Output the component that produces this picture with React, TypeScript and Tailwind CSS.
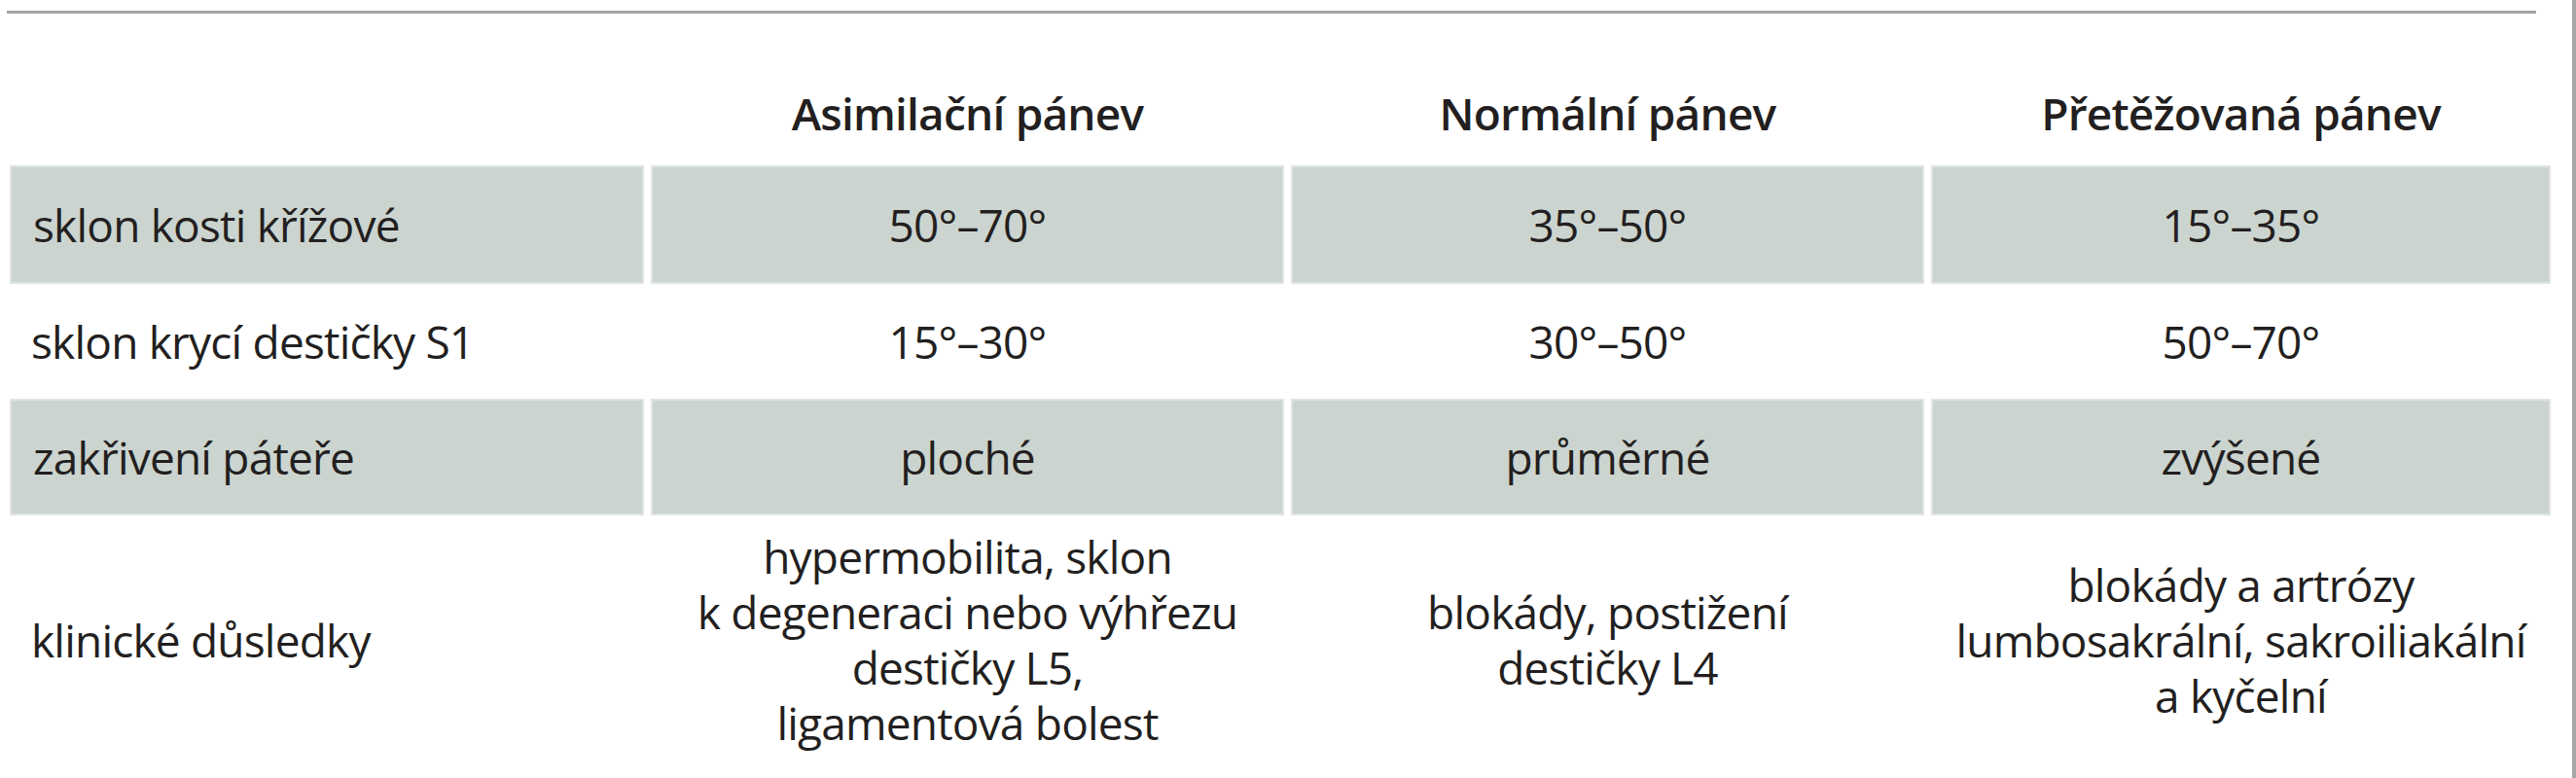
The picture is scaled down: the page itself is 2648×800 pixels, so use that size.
import React from "react";

type Row = { label: string; cells: React.ReactNode[]; shaded: boolean; h: string };

const rows: Row[] = [
  { label: "sklon kosti křížové", cells: ["50°–70°", "35°–50°", "15°–35°"], shaded: true, h: "h-[122px]" },
  { label: "sklon krycí destičky S1", cells: ["15°–30°", "30°–50°", "50°–70°"], shaded: false, h: "h-[118px]" },
  { label: "zakřivení páteře", cells: ["ploché", "průměrné", "zvýšené"], shaded: true, h: "h-[120px]" },
  {
    label: "klinické důsledky",
    cells: [
      <>
        hypermobilita, sklon
        <br />k degeneraci nebo výhřezu
        <br />destičky L5,
        <br />ligamentová bolest
      </>,
      <>
        blokády, postižení
        <br />destičky L4
      </>,
      <>
        blokády a artrózy
        <br />
        lumbosakrální, sakroiliakální
        <br />a kyčelní
      </>,
    ],
    shaded: false,
    h: "h-[256px]",
  },
];

const headers = ["Asimilační pánev", "Normální pánev", "Přetěžovaná pánev"];

export default function App() {
  return (
    <div className="w-[2648px] h-[800px] overflow-hidden bg-white border-r-[4px] border-[#a6a6a6] font-['Open_Sans',sans-serif] text-[46px] tracking-[-0.8px] leading-[57px] text-[#231f20]">
      <div className="mt-[11px] ml-[7px] w-[2600px] h-[3px] bg-[#a3a3a3]" />
      <div className="ml-[10px] grid grid-cols-[652px_651px_651px_637px] gap-x-[7px]">
        <div className="h-[156px]" />
        {headers.map((h) => (
          <div key={h} className="h-[156px] flex items-end justify-center pb-[25px] font-semibold">
            {h}
          </div>
        ))}
        {rows.map((r) => (
          <React.Fragment key={r.label}>
            <div
              className={
                r.h +
                " flex items-center pl-[22px] " +
                (r.shaded ? "bg-[#ccd4cf] border-[2px] border-[#dfe5e2]" : "")
              }
            >
              {r.label}
            </div>
            {r.cells.map((c, i) => (
              <div
                key={i}
                className={
                  r.h +
                  " flex items-center justify-center text-center " +
                  (r.shaded ? "bg-[#ccd4cf] border-[2px] border-[#dfe5e2]" : "")
                }
              >
                <div>{c}</div>
              </div>
            ))}
          </React.Fragment>
        ))}
      </div>
    </div>
  );
}
